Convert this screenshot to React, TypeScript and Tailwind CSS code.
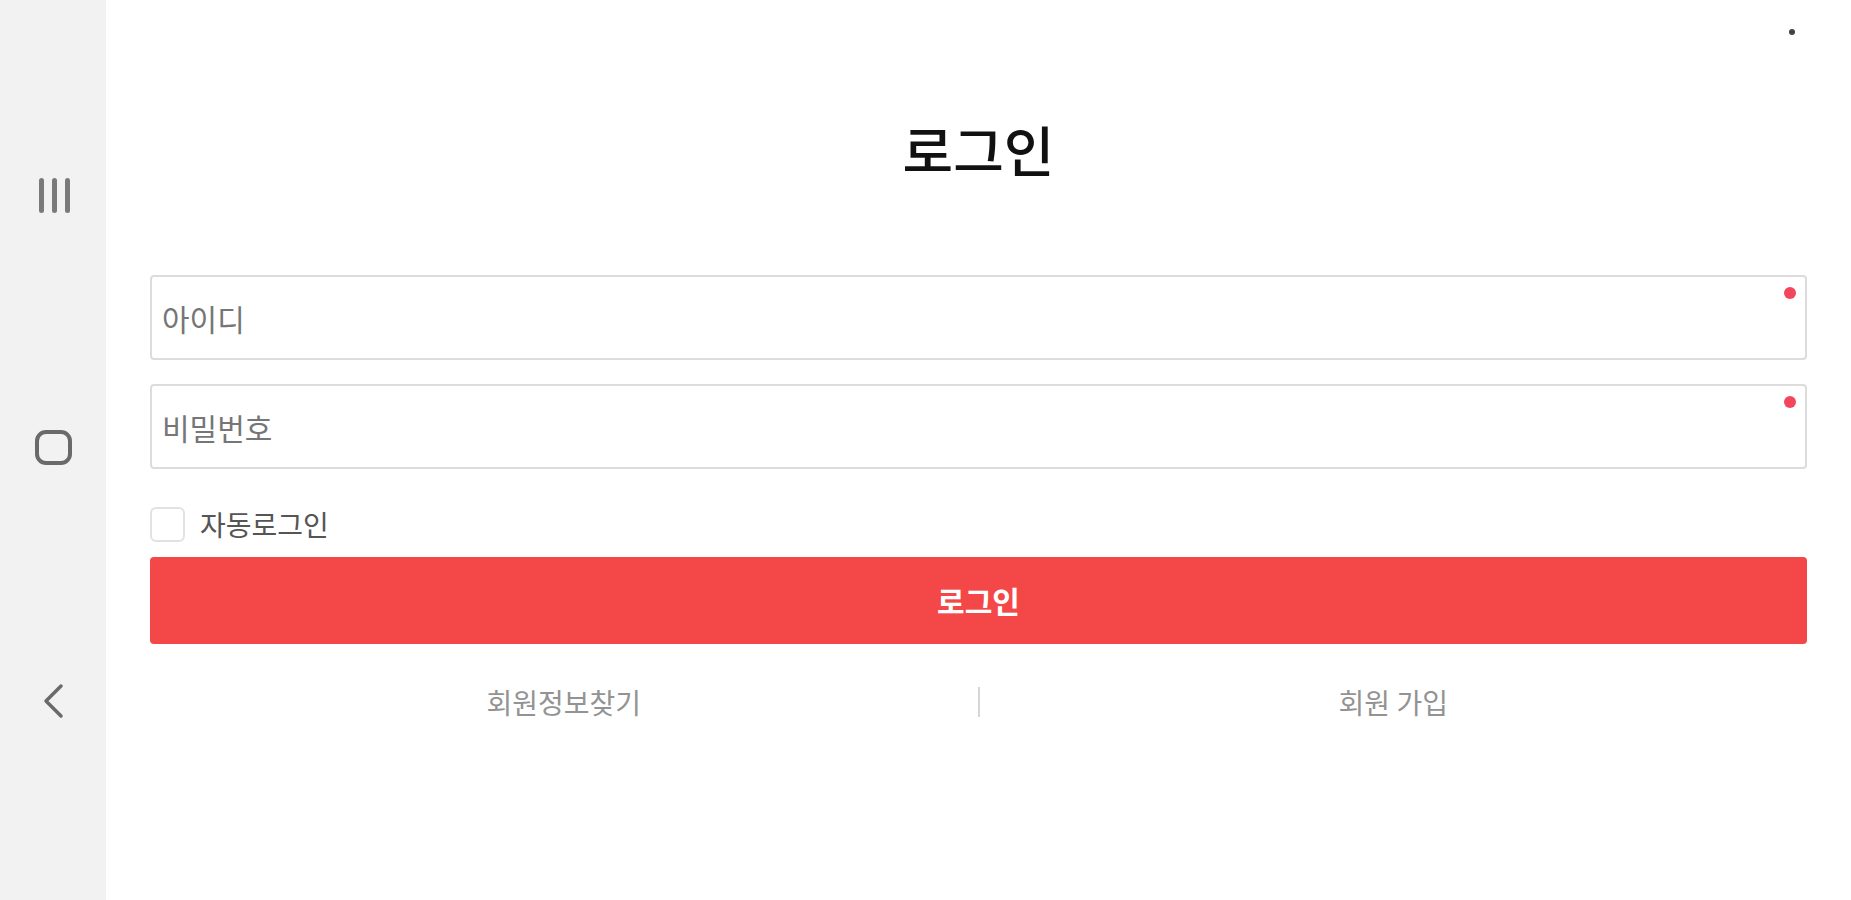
import { useState } from "react";

const font = { fontFamily: '"Noto Sans CJK KR", "Noto Sans", sans-serif' };

function SideBar() {
  return (
    <aside className="flex h-[900px] w-[106px] shrink-0 flex-col items-center bg-[#f2f2f2]">
      {/* recent apps */}
      <div className="mt-[178px] flex h-[35px] gap-[8px] pl-[2px]">
        <span className="h-full w-[5px] rounded-full bg-[#7a7a7a]" />
        <span className="h-full w-[5px] rounded-full bg-[#7a7a7a]" />
        <span className="h-full w-[5px] rounded-full bg-[#7a7a7a]" />
      </div>
      {/* home */}
      <div className="mt-[217px] h-[35px] w-[37px] rounded-[11px] border-[4px] border-[#6a6a6a]" />
      {/* back */}
      <svg className="mt-[218px]" width="24" height="36" viewBox="0 0 24 36" fill="none">
        <path d="M20 3 L5 18 L20 33" stroke="#6a6a6a" strokeWidth="3.5" strokeLinecap="round" strokeLinejoin="round" />
      </svg>
    </aside>
  );
}

function Field({ placeholder, type = "text" }: { placeholder: string; type?: string }) {
  return (
    <div className="relative">
      <input
        type={type}
        placeholder={placeholder}
        style={font}
        className="h-[85px] w-full rounded-[4px] border-2 border-[#dcdcdc] bg-white pl-[10px] text-[30px] text-[#333] outline-none placeholder:text-[#767676]"
      />
      <span className="absolute right-[11px] top-[12px] h-[12px] w-[12px] rounded-full bg-[#f2465c]" />
    </div>
  );
}

export default function App() {
  const [auto, setAuto] = useState(false);
  return (
    <div className="flex min-h-[900px] w-full bg-white" style={font}>
      <SideBar />
      <main className="flex-1 px-[44px]">
        <div className="flex h-[60px] justify-end pr-[12px] pt-[29px]">
          <span className="h-[6px] w-[6px] rounded-full bg-[#444]" />
        </div>
        <h1 className="mt-[61px] text-center text-[55px] font-medium leading-[54px] text-[#111]">로그인</h1>

        <form className="mt-[100px] flex flex-col" onSubmit={(e) => e.preventDefault()}>
          <div className="flex flex-col gap-[24px]">
            <Field placeholder="아이디" />
            <Field placeholder="비밀번호" type="password" />
          </div>

          <label className="mt-[38px] flex cursor-pointer items-center gap-[15px]">
            <input
              type="checkbox"
              checked={auto}
              onChange={(e) => setAuto(e.target.checked)}
              className="h-[35px] w-[35px] appearance-none rounded-[6px] border-2 border-[#e2e2e2] bg-white checked:bg-[#f34848]"
            />
            <span className="text-[28px] leading-[35px] text-[#555]">자동로그인</span>
          </label>

          <button
            type="submit"
            className="mt-[15px] h-[87px] w-full rounded-[4px] bg-[#f44848] text-[30px] font-bold text-white"
          >
            로그인
          </button>
        </form>

        <div className="mt-[28px] flex h-[60px] items-center">
          <a className="flex-1 text-center text-[28px] text-[#939393]">회원정보찾기</a>
          <span className="h-[30px] w-[2px] bg-[#d6d6d6]" />
          <a className="flex-1 text-center text-[28px] text-[#939393]">회원 가입</a>
        </div>
      </main>
    </div>
  );
}
